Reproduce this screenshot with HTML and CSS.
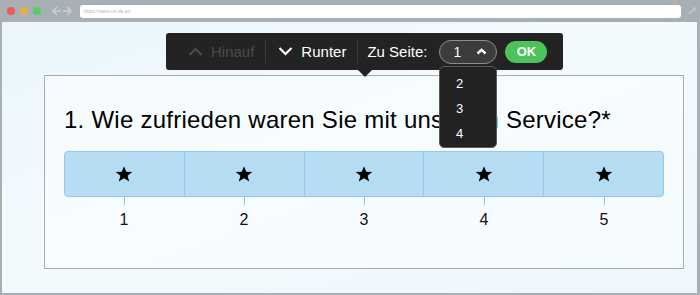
FILE: index.html
```html
<!DOCTYPE html>
<html lang="de">
<head>
<meta charset="utf-8">
<title>Umfrage</title>
<link rel="stylesheet" href="styles.css">
</head>
<body>
<div class="browser">
  <div class="chrome">
    <span class="dot red"></span>
    <span class="dot yellow"></span>
    <span class="dot green"></span>
    <svg class="nav" width="26" height="10" viewBox="0 0 26 10"><polyline points="9,1 5,5 9,9" fill="none" stroke="#c9cfd3" stroke-width="1.6"/><line x1="5" y1="5" x2="13" y2="5" stroke="#c9cfd3" stroke-width="1.6"/><polyline points="19,1 23,5 19,9" fill="none" stroke="#c9cfd3" stroke-width="1.6"/><line x1="15" y1="5" x2="23" y2="5" stroke="#c9cfd3" stroke-width="1.6"/></svg>
    <div class="url">https://www.url.de.at/</div>
    <svg class="expand" width="10" height="10" viewBox="0 0 10 10"><line x1="2" y1="8" x2="8" y2="2" stroke="#c2c8cc" stroke-width="1.4"/><polyline points="5,2 8,2 8,5" fill="none" stroke="#c2c8cc" stroke-width="1.2"/></svg>
  </div>
  <div class="viewport">
    <div class="card">
      <h1 class="question">1. Wie zufrieden waren Sie mit unserem Service?*</h1>
      <div class="rating">
        <div class="cells">
          <div class="cell"><svg class="star" viewBox="0 0 24 24"><polygon points="12,1.5 15,9 23,9.3 16.8,14.3 19,22 12,17.6 5,22 7.2,14.3 1,9.3 9,9"/></svg></div>
          <div class="cell"><svg class="star" viewBox="0 0 24 24"><polygon points="12,1.5 15,9 23,9.3 16.8,14.3 19,22 12,17.6 5,22 7.2,14.3 1,9.3 9,9"/></svg></div>
          <div class="cell"><svg class="star" viewBox="0 0 24 24"><polygon points="12,1.5 15,9 23,9.3 16.8,14.3 19,22 12,17.6 5,22 7.2,14.3 1,9.3 9,9"/></svg></div>
          <div class="cell"><svg class="star" viewBox="0 0 24 24"><polygon points="12,1.5 15,9 23,9.3 16.8,14.3 19,22 12,17.6 5,22 7.2,14.3 1,9.3 9,9"/></svg></div>
          <div class="cell"><svg class="star" viewBox="0 0 24 24"><polygon points="12,1.5 15,9 23,9.3 16.8,14.3 19,22 12,17.6 5,22 7.2,14.3 1,9.3 9,9"/></svg></div>
        </div>
        <div class="labels">
          <div class="label"><span class="tick"></span><span class="num">1</span></div>
          <div class="label"><span class="tick"></span><span class="num">2</span></div>
          <div class="label"><span class="tick"></span><span class="num">3</span></div>
          <div class="label"><span class="tick"></span><span class="num">4</span></div>
          <div class="label"><span class="tick"></span><span class="num">5</span></div>
        </div>
      </div>
    </div>

    <div class="toolbar">
      <div class="tb-item disabled">
        <svg width="15" height="9" viewBox="0 0 15 9"><polyline points="1.5,8 7.5,2 13.5,8" fill="none" stroke="currentColor" stroke-width="2.2"/></svg>
        <span>Hinauf</span>
      </div>
      <span class="sep"></span>
      <div class="tb-item">
        <svg width="15" height="9" viewBox="0 0 15 9"><polyline points="1.5,1 7.5,7 13.5,1" fill="none" stroke="currentColor" stroke-width="2.2"/></svg>
        <span>Runter</span>
      </div>
      <span class="sep"></span>
      <span class="tb-label">Zu Seite:</span>
      <div class="select">
        <span>1</span>
        <svg width="11" height="7" viewBox="0 0 11 7"><polyline points="1.5,5.5 5.5,1.8 9.5,5.5" fill="none" stroke="#fff" stroke-width="2.4"/></svg>
      </div>
      <button class="ok">OK</button>
      <span class="pointer"></span>
      <ul class="dropdown">
        <li>2</li>
        <li>3</li>
        <li>4</li>
      </ul>
    </div>
  </div>
</div>
</body>
</html>
```

FILE: styles.css
```css
* { box-sizing: border-box; }
html, body { margin: 0; padding: 0; }
body {
  width: 700px;
  height: 295px;
  overflow: hidden;
  font-family: "Liberation Sans", Arial, sans-serif;
  background: #a9b0b5;
}
.browser {
  width: 700px;
  height: 295px;
  background: #a9b0b5;
  display: flex;
  flex-direction: column;
}
.chrome {
  height: 22px;
  display: flex;
  align-items: center;
  padding-left: 7px;
}
.dot {
  width: 8px;
  height: 8px;
  border-radius: 50%;
  margin-right: 5px;
}
.red { background: #f0575e; }
.yellow { background: #e3b04c; }
.green { background: #52cf62; }
.nav { margin-left: 2px; margin-right: 6px; }
.url {
  width: 601px;
  height: 13px;
  background: #fff;
  border-radius: 3px;
  font-size: 5px;
  line-height: 13px;
  color: #b7bcc0;
  padding-left: 4px;
}
.expand { margin-left: 6px; }

.viewport {
  position: relative;
  margin: 0 3px 0 2px;
  height: 271px;
  background: linear-gradient(160deg, #eaf6fc 0%, #f3fbfe 45%, #eef7fc 100%);
  padding: 53px 0 0 42px;
}
.card {
  width: 640px;
  height: 194px;
  border: 1px solid #ababab;
  background: rgba(250, 254, 255, 0.6);
  padding: 31px 0 0 19px;
}
.question {
  margin: 0;
  font-size: 24px;
  letter-spacing: 0.25px;
  line-height: 26px;
  font-weight: normal;
  color: #000;
  white-space: nowrap;
}
.rating {
  margin-top: 18px;
  width: 600px;
}
.cells {
  display: flex;
  height: 46px;
  background: #b7ddf4;
  border: 1px solid #93c9ea;
  border-radius: 4px;
}
.cell {
  flex: 1;
  display: flex;
  align-items: center;
  justify-content: center;
  border-left: 1px solid #93c9ea;
}
.cell:first-child { border-left: none; }
.star { width: 18px; height: 18px; fill: #000; }
.labels { display: flex; }
.label {
  flex: 1;
  display: flex;
  flex-direction: column;
  align-items: center;
}
.tick {
  width: 1px;
  height: 8px;
  background: #93c9ea;
}
.num {
  margin-top: 6px;
  font-size: 16px;
  line-height: 18px;
  color: #111;
}

.toolbar {
  position: absolute;
  left: 164px;
  top: 11px;
  width: 397px;
  height: 37px;
  background: #232323;
  border-radius: 3px;
  display: flex;
  align-items: center;
  padding: 0 16px 0 22px;
  color: #fff;
  font-size: 15px;
  white-space: nowrap;
}
.toolbar > * { flex-shrink: 0; }
.tb-item {
  display: flex;
  align-items: center;
  gap: 6px;
}
.tb-item svg { margin-right: 2px; }
.tb-item.disabled { color: #4b4b4b; }
.sep {
  width: 1px;
  height: 23px;
  background: #3b3b3b;
  margin: 0 12px 0 11px;
}
.tb-label { margin-left: -3px; }
.select {
  margin-left: 12px;
  width: 58px;
  height: 24px;
  border: 1px solid #8d8d8d;
  border-radius: 12px;
  background: #3c3c3c;
  display: flex;
  align-items: center;
  padding-left: 13px;
  gap: 15px;
  font-size: 14px;
}
.ok {
  margin-left: 8px;
  width: 42px;
  height: 22px;
  border: none;
  border-radius: 11px;
  background: #4cc35b;
  color: #fff;
  font-family: "Liberation Sans", Arial, sans-serif;
  font-size: 13px;
  font-weight: bold;
  padding: 0;
}
.pointer {
  position: absolute;
  left: 191px;
  top: 36px;
  width: 0;
  height: 0;
  border-left: 8px solid transparent;
  border-right: 8px solid transparent;
  border-top: 8px solid #232323;
}
.dropdown {
  position: absolute;
  left: 273px;
  top: 33px;
  width: 58px;
  height: 82px;
  margin: 0;
  padding: 4px 0 0 16px;
  list-style: none;
  background: #222;
  border: 1px solid #5a5a5a;
  border-radius: 5px;
  font-size: 13px;
  color: #fff;
}
.dropdown li { height: 25px; line-height: 25px; }
```
